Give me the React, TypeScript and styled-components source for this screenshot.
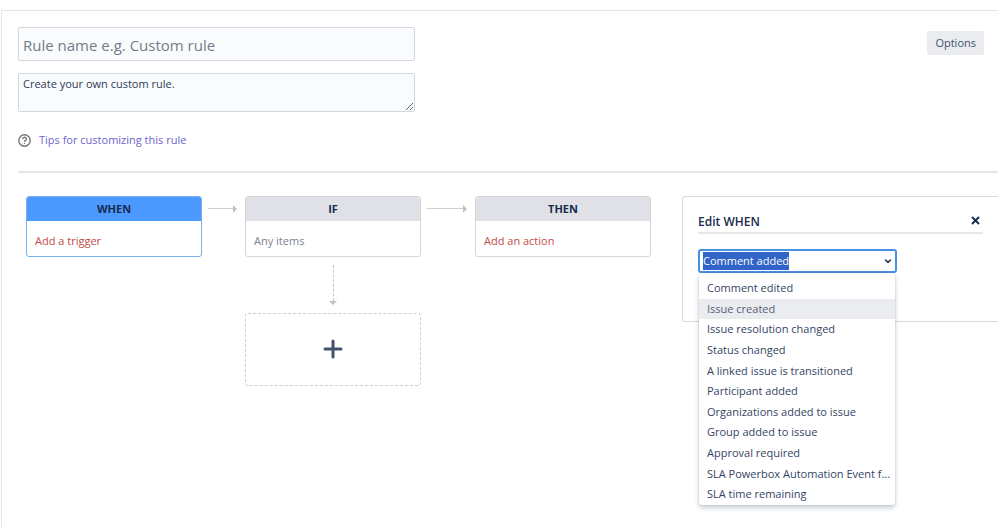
import React, { useEffect, useRef, useState } from "react";
import styled, { createGlobalStyle } from "styled-components";

const GlobalStyle = createGlobalStyle`
  * { box-sizing: border-box; }
  body {
    margin: 0;
    background: #fff;
    color: #172b4d;
    font: 11px/20px "Open Sans", "Noto Sans", sans-serif;
  }
  button, input, textarea { font: inherit; color: inherit; }
`;

const Page = styled.div`
  padding-top: 10px;
`;

const Content = styled.main`
  min-height: calc(100vh - 10px);
  margin-left: 1px;
  padding: 16px 0 16px 16px;
  border-top: 1px solid #e4e5e8;
  border-left: 1px solid #e4e5e8;
`;

const Header = styled.header`
  display: flex;
  justify-content: space-between;
  align-items: flex-start;
  padding-bottom: 21px;
  border-bottom: 2px solid #e6e7e9;
`;

const RuleForm = styled.form`
  flex: 0 1 397px;
  display: flex;
  flex-direction: column;
  gap: 12px;
`;

const RuleName = styled.input`
  width: 100%;
  height: 34px;
  padding: 2px 4px 0;
  border: 1px solid #d3d7de;
  border-radius: 2px;
  background: #fafbfc;
  font-size: 15px;
  &::placeholder { color: #747b87; opacity: 1; }
`;

const Description = styled.textarea`
  display: block;
  width: 100%;
  height: 39px;
  padding: 0 4px;
  border: 1px solid #d3d7de;
  border-radius: 2px;
  background: #fafbfc;
  color: #2c3c58;
  overflow: hidden;
  resize: vertical;
`;

const Tips = styled.a`
  display: flex;
  align-items: center;
  align-self: flex-start;
  gap: 8px;
  margin-top: 6px;
  color: #6c66cc;
  text-decoration: none;
`;

const OptionsButton = styled.button`
  height: 24px;
  margin: 4px 14px 0 0;
  padding: 0 8px;
  border: 0;
  border-radius: 2px;
  background: #ebecf0;
  color: #42526e;
`;

const Builder = styled.div`
  display: flex;
  align-items: flex-start;
  padding: 23px 0 0 8px;
`;

const Column = styled.div`
  flex: 0 1 176px;
  display: flex;
  flex-direction: column;
`;

const Card = styled.section<{ $active?: boolean }>`
  border: 1px solid ${(p) => (p.$active ? "#78b0f0" : "#d5d6d9")};
  border-radius: 3px;
  overflow: hidden;
`;

const CardTitle = styled.h2<{ $active?: boolean }>`
  margin: -1px;
  background: ${(p) => (p.$active ? "#4c9aff" : "#dfe1e6")};
  color: #172b4d;
  font-size: 11px;
  font-weight: 700;
  line-height: 25px;
  text-align: center;
`;

const CardBody = styled.button<{ $missing?: boolean }>`
  display: block;
  width: 100%;
  height: 36px;
  padding: 6px 8px 0;
  border: 0;
  background: transparent;
  color: ${(p) => (p.$missing ? "#c34a45" : "#7a8190")};
  text-align: left;
`;

const Link = styled.div<{ $width: number }>`
  flex: 0 0 ${(p) => p.$width}px;
  display: flex;
  align-items: center;
  height: 25px;
  padding: 0 8px 0 6px;
  &::before {
    content: "";
    flex: 1;
    border-top: 1px solid #d0d0d2;
  }
`;

const DownLink = styled.div`
  display: flex;
  flex-direction: column;
  align-items: center;
  height: 56px;
  padding: 8px 0 8px;
  &::before {
    content: "";
    flex: 1;
    border-left: 1px dashed #c8c8ca;
  }
`;

const AddButton = styled.button`
  display: flex;
  align-items: center;
  justify-content: center;
  height: 73px;
  padding: 0 0 2px;
  border: 1px dashed #cfcfd1;
  border-radius: 3px;
  background: #fff;
  color: #42526e;
`;

const Panel = styled.section`
  flex: 1;
  min-width: 0;
  margin-left: 31px;
  height: 126px;
  padding: 14px 15px 0 15px;
  border: 1px solid #d9dadd;
  border-right: 0;
  border-radius: 3px 0 0 3px;
`;

const PanelHeader = styled.div`
  display: flex;
  align-items: center;
  justify-content: space-between;
  height: 23px;
  border-bottom: 2px solid #e6e7e9;
`;

const PanelTitle = styled.h2`
  margin: 0;
  font-size: 12px;
  font-weight: 600;
`;

const CloseButton = styled.button`
  display: flex;
  padding: 0 3px 2px;
  border: 0;
  background: none;
`;

const Combo = styled.div`
  position: relative;
  display: flex;
  align-items: center;
  width: 199px;
  height: 24px;
  margin-top: 15px;
  padding: 0 3px;
  border: 2px solid #4a90e2;
  border-radius: 3px;
`;

const ComboInput = styled.input`
  flex: 1;
  min-width: 0;
  height: 18px;
  padding: 0;
  border: 0;
  outline: 0;
  background: transparent;
  &::selection { background: #3064c8; color: #fff; }
`;

const ToggleButton = styled.button`
  display: flex;
  padding: 0;
  border: 0;
  background: none;
`;

const Menu = styled.ul`
  position: absolute;
  top: 100%;
  left: -1px;
  right: 0;
  display: grid;
  grid-template-rows: repeat(11, 1fr);
  height: 232px;
  margin: 2px 0 0;
  padding: 5px 0 0;
  border-radius: 3px;
  background: #fff;
  box-shadow: 0 3px 5px rgba(9, 30, 66, 0.22), 0 0 2px rgba(9, 30, 66, 0.18);
  list-style: none;
`;

const Option = styled.li<{ $hovered?: boolean }>`
  padding: 0 0 0 8px;
  background: ${(p) => (p.$hovered ? "#ebecf0" : "transparent")};
  color: ${(p) => (p.$hovered ? "#56607a" : "#344563")};
  white-space: nowrap;
`;

const triggers = [
  "Comment edited",
  "Issue created",
  "Issue resolution changed",
  "Status changed",
  "A linked issue is transitioned",
  "Participant added",
  "Organizations added to issue",
  "Group added to issue",
  "Approval required",
  "SLA Powerbox Automation Event f...",
  "SLA time remaining",
];

const HelpIcon = () => (
  <svg width="13" height="13" viewBox="0 0 13 13" fill="none" stroke="#757575" strokeWidth="1.4" aria-hidden="true">
    <circle cx="6.5" cy="6.5" r="5.7" />
    <path d="M4.7 5.2a1.8 1.8 0 1 1 2.7 1.5c-.7.4-.9.6-.9 1.2M6.5 8.9v1.2" />
  </svg>
);

const ArrowHead = ({ down }: { down?: boolean }) => (
  <svg width={down ? 8 : 4} height={down ? 4 : 8} fill="#c1c1c3" aria-hidden="true">
    <path d={down ? "M0 0h8L4 4z" : "M0 0v8l4-4z"} />
  </svg>
);

const PlusIcon = () => (
  <svg width="20" height="20" viewBox="0 0 20 20" stroke="currentColor" strokeWidth="3" strokeLinecap="round" aria-hidden="true">
    <path d="M10 2v16M2 10h16" />
  </svg>
);

const CloseIcon = () => (
  <svg width="9" height="9" viewBox="0 0 9 9" stroke="#172b4d" strokeWidth="1.9" aria-hidden="true">
    <path d="M1 1l7 7M8 1l-7 7" />
  </svg>
);

const ChevronIcon = () => (
  <svg width="8" height="6" viewBox="0 0 8 6" fill="none" stroke="#253858" strokeWidth="1.6" strokeLinecap="round" aria-hidden="true">
    <path d="M1.5 2L4 4.3 6.500 2" />
  </svg>
);

export default function App() {
  const [trigger, setTrigger] = useState("Comment added");
  const inputRef = useRef<HTMLInputElement>(null);

  useEffect(() => {
    inputRef.current?.focus();
    inputRef.current?.select();
  }, []);

  return (
    <Page>
      <GlobalStyle />
      <Content>
        <Header>
          <RuleForm>
            <RuleName aria-label="Rule name" placeholder="Rule name e.g. Custom rule" />
            <Description aria-label="Rule description" defaultValue="Create your own custom rule." />
            <Tips href="#tips">
              <HelpIcon />
              Tips for customizing this rule
            </Tips>
          </RuleForm>
          <OptionsButton type="button">Options</OptionsButton>
        </Header>

        <Builder>
          <Column>
            <Card $active>
              <CardTitle $active>WHEN</CardTitle>
              <CardBody $missing>Add a trigger</CardBody>
            </Card>
          </Column>
          <Link $width={43}>
            <ArrowHead />
          </Link>
          <Column>
            <Card>
              <CardTitle>IF</CardTitle>
              <CardBody>Any items</CardBody>
            </Card>
            <DownLink>
              <ArrowHead down />
            </DownLink>
            <AddButton type="button" aria-label="Add condition">
              <PlusIcon />
            </AddButton>
          </Column>
          <Link $width={54}>
            <ArrowHead />
          </Link>
          <Column>
            <Card>
              <CardTitle>THEN</CardTitle>
              <CardBody $missing>Add an action</CardBody>
            </Card>
          </Column>

          <Panel>
            <PanelHeader>
              <PanelTitle>Edit WHEN</PanelTitle>
              <CloseButton type="button" aria-label="Close">
                <CloseIcon />
              </CloseButton>
            </PanelHeader>
            <Combo>
              <ComboInput
                ref={inputRef}
                role="combobox"
                aria-label="Trigger"
                aria-expanded="true"
                aria-controls="trigger-menu"
                value={trigger}
                onChange={(e) => setTrigger(e.target.value)}
              />
              <ToggleButton type="button" aria-label="Toggle triggers">
                <ChevronIcon />
              </ToggleButton>
              <Menu id="trigger-menu" role="listbox">
                {triggers.map((name) => (
                  <Option
                    key={name}
                    role="option"
                    aria-selected={name === trigger}
                    $hovered={name === "Issue created"}
                    onClick={() => setTrigger(name)}
                  >
                    {name}
                  </Option>
                ))}
              </Menu>
            </Combo>
          </Panel>
        </Builder>
      </Content>
    </Page>
  );
}
